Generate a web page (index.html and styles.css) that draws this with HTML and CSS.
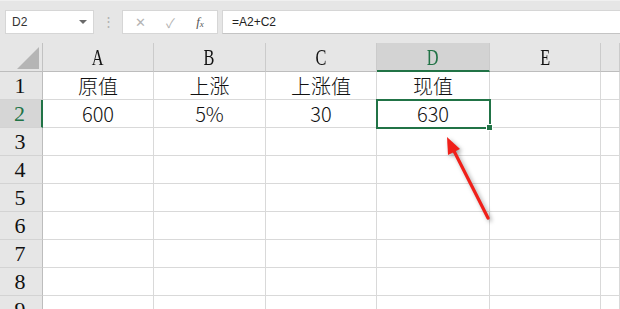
FILE: index.html
```html
<!DOCTYPE html>
<html lang="zh-CN">
<head>
	<meta charset="UTF-8">
	<title>现值</title>
	<link rel="stylesheet" href="styles.css">
</head>
<body>

	<div class="topbar">
		<div class="formula-row">
			<div class="namebox">
				<span>D2</span>
				<span class="drop"></span>
			</div>
			<div class="grip">⋮</div>
			<div class="fx-buttons">
				<span class="fx-btn">✕</span>
				<span class="fx-btn">✓</span>
				<span class="fx-btn fx">f<sub>x</sub></span>
			</div>
			<div class="formula">=A2+C2</div>
		</div>
	</div>

	<div class="sheet">
		<div class="corner"><span class="tri"></span></div>
		<div class="col-head"><span class="letter">A</span></div>
		<div class="col-head"><span class="letter">B</span></div>
		<div class="col-head"><span class="letter">C</span></div>
		<div class="col-head active"><span class="letter">D</span></div>
		<div class="col-head"><span class="letter">E</span></div>
		<div class="col-head"></div>

		<div class="row-head">1</div>
		<div class="cell">原值</div>
		<div class="cell">上涨</div>
		<div class="cell">上涨值</div>
		<div class="cell">现值</div>
		<div class="cell"></div>
		<div class="cell"></div>

		<div class="row-head active">2</div>
		<div class="cell">600</div>
		<div class="cell">5%</div>
		<div class="cell">30</div>
		<div class="cell selected">630</div>
		<div class="cell"></div>
		<div class="cell"></div>

		<div class="row-head">3</div>
		<div class="cell"></div><div class="cell"></div><div class="cell"></div><div class="cell"></div><div class="cell"></div><div class="cell"></div>
		<div class="row-head">4</div>
		<div class="cell"></div><div class="cell"></div><div class="cell"></div><div class="cell"></div><div class="cell"></div><div class="cell"></div>
		<div class="row-head">5</div>
		<div class="cell"></div><div class="cell"></div><div class="cell"></div><div class="cell"></div><div class="cell"></div><div class="cell"></div>
		<div class="row-head">6</div>
		<div class="cell"></div><div class="cell"></div><div class="cell"></div><div class="cell"></div><div class="cell"></div><div class="cell"></div>
		<div class="row-head">7</div>
		<div class="cell"></div><div class="cell"></div><div class="cell"></div><div class="cell"></div><div class="cell"></div><div class="cell"></div>
		<div class="row-head">8</div>
		<div class="cell"></div><div class="cell"></div><div class="cell"></div><div class="cell"></div><div class="cell"></div><div class="cell"></div>
		<div class="row-head">9</div>
		<div class="cell"></div><div class="cell"></div><div class="cell"></div><div class="cell"></div><div class="cell"></div><div class="cell"></div>
	</div>

	<!-- flèche rouge par-dessus la feuille -->
	<svg class="arrow" width="620" height="309" viewBox="0 0 620 309">
		<line x1="488" y1="218" x2="454" y2="151" stroke="#f0201a" stroke-width="3.2" stroke-linecap="round"/>
		<polygon points="447,137 460,149 448,155" fill="#f0201a"/>
	</svg>

</body>
</html>
```

FILE: styles.css
```css
html, body {
	margin: 0;
	padding: 0;
	width: 620px;
	height: 309px;
	overflow: hidden;
	background: #ffffff;
	font-family: "Liberation Sans", Arial, sans-serif;
}

.topbar {
	height: 43px;
	background: #e6e6e6;
	border-top: 1px solid #f0f0f0;
	box-sizing: border-box;
}

.formula-row {
	display: flex;
	height: 24px;
	margin-top: 9px;
}

.namebox {
	width: 89px;
	margin-left: 5px;
	background: #fff;
	border: 1px solid #d6d6d6;
	box-sizing: border-box;
	display: flex;
	align-items: center;
	justify-content: space-between;
	padding: 0 6px 0 6px;
	font-size: 12px;
	color: #333;
}

.drop {
	width: 0;
	height: 0;
	border-left: 4px solid transparent;
	border-right: 4px solid transparent;
	border-top: 4px solid #6a6a6a;
}

.grip {
	width: 28px;
	text-align: center;
	color: #b0b0b0;
	font-size: 13px;
	line-height: 24px;
}

.fx-buttons {
	width: 96px;
	background: #fff;
	border: 1px solid #d6d6d6;
	box-sizing: border-box;
	display: flex;
	align-items: center;
	justify-content: space-around;
	padding: 0 2px;
}

.fx-btn {
	font-size: 13px;
	color: #b4b4b4;
	width: 26px;
	text-align: center;
}

.fx {
	font-family: "Liberation Serif", serif;
	font-style: italic;
	color: #555;
	font-size: 13px;
}

	.fx sub {
		font-size: 9px;
		vertical-align: -1px;
	}

.formula {
	flex: 1;
	margin-left: 4px;
	background: #fff;
	border: 1px solid #d6d6d6;
	border-right: none;
	border-bottom-color: #c4c4c4;
	box-sizing: border-box;
	font-size: 12px;
	color: #222;
	line-height: 22px;
	padding-left: 9px;
}

.sheet {
	display: grid;
	grid-template-columns: 43px 111px 112px 111px 113px 111px 1fr;
	grid-template-rows: 29px repeat(9, 28px);
}

.corner {
	background: #e6e6e6;
	border-right: 1px solid #c2c2c2;
	border-bottom: 1px solid #bdbdbd;
	box-sizing: border-box;
	position: relative;
}

.tri {
	position: absolute;
	right: 3px;
	bottom: 2px;
	width: 0;
	height: 0;
	border-left: 22px solid transparent;
	border-bottom: 22px solid #b5b5b5;
}

.col-head {
	background: #e6e6e6;
	border-right: 1px solid #cbcbcb;
	border-bottom: 1px solid #bdbdbd;
	box-sizing: border-box;
	display: flex;
	align-items: center;
	justify-content: center;
	color: #111;
}

	.col-head.active {
		background: #d3d3d3;
		color: #217346;
		border-bottom: 2px solid #217346;
	}

.letter {
	display: inline-block;
	font-family: "Liberation Serif", serif;
	font-size: 24px;
	transform: scaleX(0.68);
	margin-top: 1px;
}

.row-head {
	background: #e6e6e6;
	border-right: 1px solid #bdbdbd;
	border-bottom: 1px solid #d3d3d3;
	box-sizing: border-box;
	display: flex;
	align-items: center;
	justify-content: center;
	font-family: "Liberation Serif", serif;
	font-size: 22px;
	color: #111;
	padding-right: 2px;
}

	.row-head.active {
		background: #d6d6d6;
		color: #217346;
		border-right: 2px solid #217346;
	}

.cell {
	border-right: 1px solid #d9d9d9;
	border-bottom: 1px solid #d9d9d9;
	box-sizing: border-box;
	display: flex;
	align-items: center;
	justify-content: center;
	font-family: "Noto Sans CJK SC", sans-serif;
	font-size: 20px;
	font-weight: 300;
	color: #111;
}

.selected {
	position: relative;
	outline: 2px solid #217346;
	outline-offset: -1px;
	z-index: 1;
}

	.selected::after {
		content: "";
		position: absolute;
		right: -4px;
		bottom: -4px;
		width: 5px;
		height: 5px;
		background: #217346;
		border: 1px solid #fff;
	}

.arrow {
	position: absolute;
	left: 0;
	top: 0;
	pointer-events: none;
	z-index: 2;
	filter: drop-shadow(2px 2px 2px rgba(0, 0, 0, 0.35));
}
```
